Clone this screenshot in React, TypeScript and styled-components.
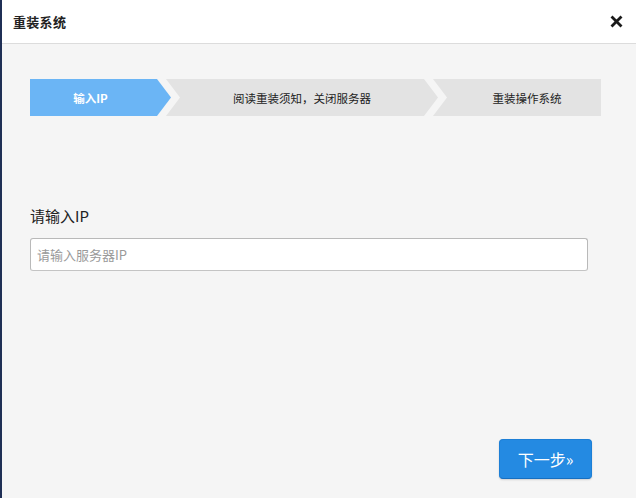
import React from "react";
import styled, { createGlobalStyle } from "styled-components";

const Global = createGlobalStyle`
  html, body { margin: 0; padding: 0; }
  body {
    width: 636px;
    height: 498px;
    overflow: hidden;
    font-family: "Liberation Sans", "Noto Sans CJK SC", sans-serif;
  }
`;

const Modal = styled.div`
  width: 636px;
  height: 498px;
  box-sizing: border-box;
  border-left: 2px solid #1f2f55;
  display: flex;
  flex-direction: column;
  background: #f5f5f5;
`;

const Header = styled.div`
  height: 44px;
  box-sizing: border-box;
  background: #fff;
  border-bottom: 1px solid #dcdcdc;
  display: flex;
  align-items: center;
  justify-content: space-between;
  padding: 0 13px 0 11px;
  flex-shrink: 0;
`;

const Title = styled.h1`
  margin: 0;
  font-size: 13px;
  font-weight: bold;
  color: #222;
  font-family: "Noto Sans CJK SC", sans-serif;
  letter-spacing: 0.3px;
`;

const CloseButton = styled.button`
  border: 0;
  background: transparent;
  padding: 0;
  width: 14px;
  height: 14px;
  display: flex;
  align-items: center;
  justify-content: center;
  cursor: pointer;
`;

const Body = styled.div`
  flex: 1;
  display: flex;
  flex-direction: column;
  padding: 35px 0 0 28px;
`;

const Steps = styled.div`
  display: flex;
  height: 37px;
  width: 571px;
`;

const Step = styled.div<{ $active?: boolean; $first?: boolean; $last?: boolean; $w: number; $pl: number; $pr: number }>`
  width: ${(p) => p.$w}px;
  flex-shrink: 0;
  margin-left: ${(p) => (p.$first ? 0 : -5)}px;
  box-sizing: border-box;
  padding: 0 ${(p) => p.$pr}px 0 ${(p) => p.$pl}px;
  background: ${(p) => (p.$active ? "#6bb5f5" : "#e3e3e3")};
  color: ${(p) => (p.$active ? "#fff" : "#222")};
  font-weight: ${(p) => (p.$active ? "bold" : "normal")};
  font-size: 11.5px;
  font-family: "Noto Sans CJK SC", sans-serif;
  display: flex;
  align-items: center;
  justify-content: center;
  clip-path: ${(p) =>
    p.$first
      ? "polygon(0 0, calc(100% - 14px) 0, 100% 50%, calc(100% - 14px) 100%, 0 100%)"
      : p.$last
      ? "polygon(0 0, 100% 0, 100% 100%, 0 100%, 14px 50%)"
      : "polygon(0 0, calc(100% - 14px) 0, 100% 50%, calc(100% - 14px) 100%, 0 100%, 14px 50%)"};
`;

const Field = styled.div`
  margin-top: 90px;
  display: flex;
  flex-direction: column;
`;

const Label = styled.label`
  font-size: 15px;
  line-height: 20px;
  color: #222;
  font-family: "Noto Sans CJK SC", sans-serif;
  margin-bottom: 12px;
`;

const Input = styled.input`
  width: 558px;
  height: 33px;
  box-sizing: border-box;
  border: 1px solid #b9b9b9;
  border-bottom-color: #c4c4c4;
  border-radius: 3px;
  background: #fff;
  padding: 0 6px;
  font-size: 13px;
  font-family: "Noto Sans CJK SC", sans-serif;
  outline: none;
  &::placeholder { color: #9a9a9a; }
`;

const Footer = styled.div`
  margin-top: 168px;
  width: 562px;
  display: flex;
  justify-content: flex-end;
`;

const NextButton = styled.button`
  width: 93px;
  height: 40px;
  box-sizing: border-box;
  border: 1px solid #1d7fd6;
  border-bottom-color: #176fc0;
  border-radius: 4px;
  background: #248ae2;
  color: #fff;
  font-size: 16px;
  font-family: "Noto Sans CJK SC", sans-serif;
  box-shadow: 0 1px 2px rgba(0, 0, 0, 0.15);
  cursor: pointer;
  padding: 0;
`;

export default function App() {
  return (
    <>
      <Global />
      <Modal>
        <Header>
          <Title>重装系统</Title>
          <CloseButton aria-label="关闭">
            <svg width="13" height="13" viewBox="0 0 13 13">
              <path d="M2.5 2.5 L10.5 10.5 M10.5 2.5 L2.5 10.5" stroke="#1a1a1a" strokeWidth="2.8" strokeLinecap="square" />
            </svg>
          </CloseButton>
        </Header>
        <Body>
          <Steps>
            <Step $active $first $w={141} $pl={0} $pr={20}>输入IP</Step>
            <Step $w={272} $pl={14} $pr={14}>阅读重装须知，关闭服务器</Step>
            <Step $last $w={168} $pl={20} $pr={0}>重装操作系统</Step>
          </Steps>
          <Field>
            <Label>请输入IP</Label>
            <Input placeholder="请输入服务器IP" />
          </Field>
          <Footer>
            <NextButton>下一步»</NextButton>
          </Footer>
        </Body>
      </Modal>
    </>
  );
}
